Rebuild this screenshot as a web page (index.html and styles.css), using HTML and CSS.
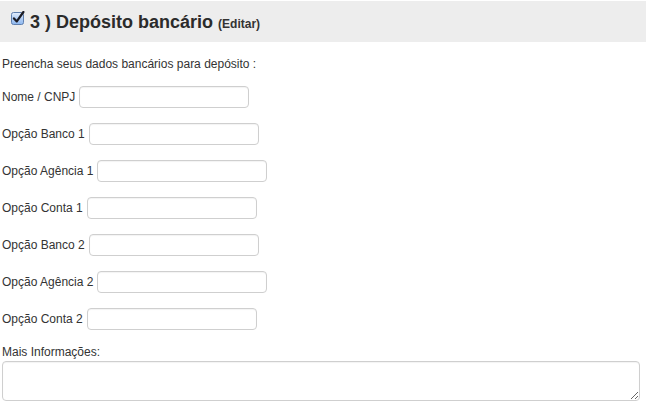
FILE: index.html
```html
<!DOCTYPE html>
<html lang="pt">
<head>
<meta charset="utf-8">
<title>Depósito bancário</title>
<link rel="stylesheet" href="styles.css">
</head>
<body>
<div class="header">
  <svg class="check" width="14" height="14" viewBox="0 0 14 14" aria-hidden="true">
    <defs>
      <linearGradient id="cb" x1="0" y1="0" x2="0" y2="1">
        <stop offset="0" stop-color="#e4eefc"/>
        <stop offset="0.5" stop-color="#b3cff5"/>
        <stop offset="1" stop-color="#8db7ef"/>
      </linearGradient>
    </defs>
    <rect x="0.5" y="1.5" width="12" height="12" rx="2" fill="url(#cb)" stroke="#5f7fae"/>
    <path d="M3 7.4 L5.8 10.4 L12.4 1" fill="none" stroke="#1c1c24" stroke-width="2.2" stroke-linecap="round" stroke-linejoin="round"/>
  </svg>
  <h2 class="title">3 ) Depósito bancário <span class="edit">(Editar)</span></h2>
</div>
<div class="content">
  <p class="intro">Preencha seus dados bancários para depósito :</p>
  <div class="rows">
    <div class="row"><label>Nome / CNPJ</label><input type="text" class="field"></div>
    <div class="row"><label>Opção Banco 1</label><input type="text" class="field"></div>
    <div class="row"><label>Opção Agência 1</label><input type="text" class="field"></div>
    <div class="row"><label>Opção Conta 1</label><input type="text" class="field"></div>
    <div class="row"><label>Opção Banco 2</label><input type="text" class="field"></div>
    <div class="row"><label>Opção Agência 2</label><input type="text" class="field"></div>
    <div class="row"><label>Opção Conta 2</label><input type="text" class="field"></div>
  </div>
  <p class="more-label">Mais Informações:</p>
  <textarea class="more"></textarea>
</div>
</body>
</html>
```
FILE: styles.css
```css
html, body {
  margin: 0;
  padding: 0;
  background: #ffffff;
}
body {
  font-family: "Liberation Sans", Arial, Helvetica, sans-serif;
  font-size: 12px;
  color: #333333;
}
.header {
  margin-top: 1px;
  height: 41px;
  box-sizing: border-box;
  background: #ededed;
  display: flex;
  align-items: flex-start;
  padding: 10px 0 0 11px;
}
.check {
  display: block;
  flex: none;
  margin-right: 5px;
}
.title {
  margin: 1px 0 0;
  font-size: 18px;
  line-height: 21px;
  font-weight: bold;
  color: #2b2b2b;
}
.edit {
  font-size: 12px;
  font-weight: bold;
  color: #333333;
}
.content {
  padding: 0 6px 0 2px;
}
.intro {
  margin: 13px 0 13px;
  line-height: 18px;
}
.rows {
  display: flex;
  flex-direction: column;
  gap: 15px;
}
.row {
  display: flex;
  align-items: center;
  gap: 4px;
  height: 22px;
}
.row label {
  line-height: 18px;
}
.field {
  box-sizing: border-box;
  width: 170px;
  height: 22px;
  margin: 0;
  padding: 2px 6px;
  border: 1px solid #cfcfcf;
  border-radius: 4px;
  background: #ffffff;
  box-shadow: inset 0 1px 1px rgba(0, 0, 0, 0.05);
  font: inherit;
}
.more-label {
  margin: 13px 0 0;
  line-height: 18px;
}
.more {
  display: block;
  box-sizing: border-box;
  width: 638px;
  height: 40px;
  margin: 0;
  padding: 4px 6px;
  border: 1px solid #cfcfcf;
  border-radius: 4px;
  box-shadow: inset 0 1px 1px rgba(0, 0, 0, 0.05);
  font: inherit;
}
```
